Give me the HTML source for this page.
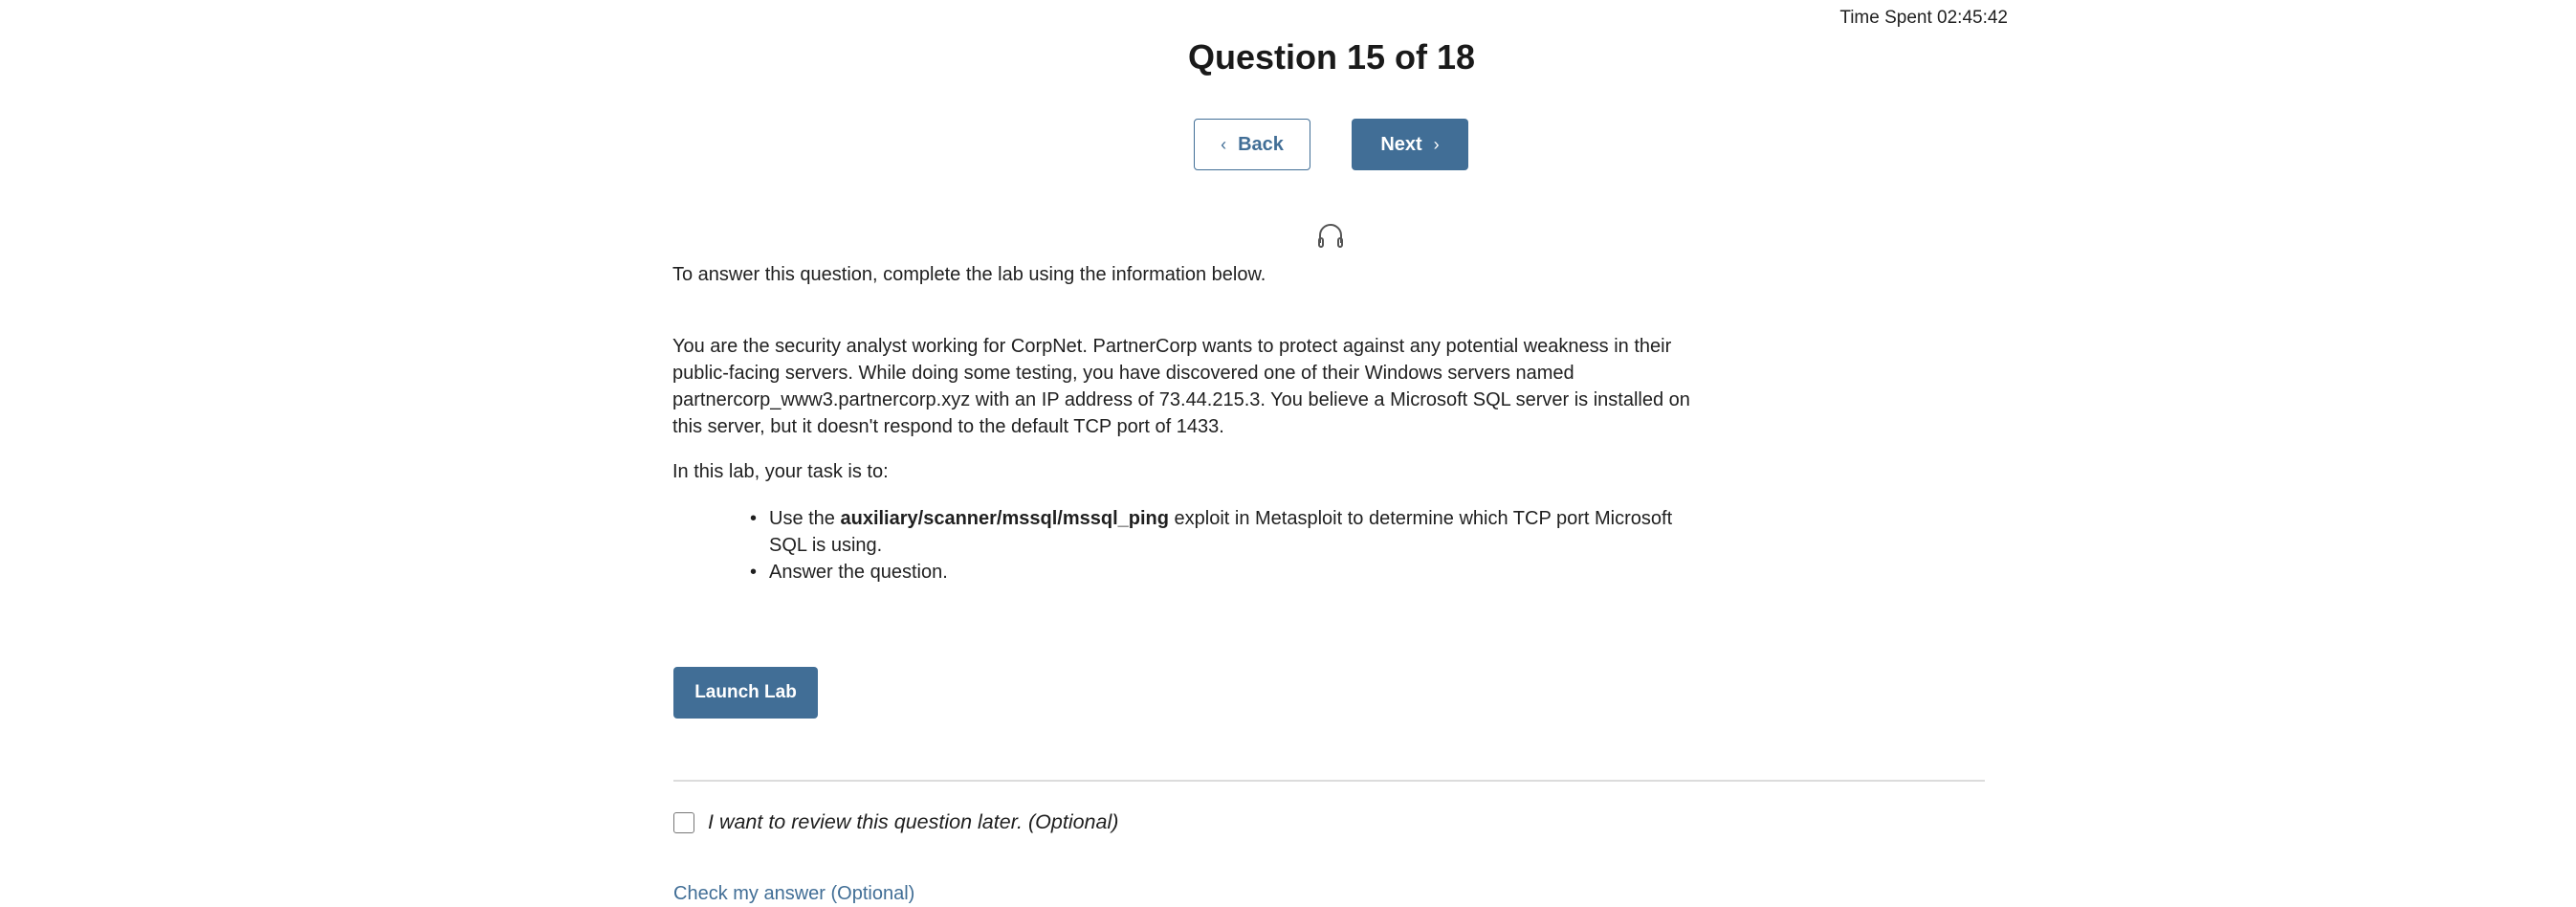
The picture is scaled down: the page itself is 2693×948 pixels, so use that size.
<!DOCTYPE html>
<html><head><meta charset="utf-8"><style>
html,body{margin:0;padding:0;background:#fff;width:2693px;height:940px;overflow:hidden;font-family:"Liberation Sans",sans-serif;color:#1f1f1f}
.a{position:absolute;white-space:nowrap}
.btn{position:absolute;box-sizing:border-box;border-radius:4px;font-weight:bold;font-size:20px;display:flex;align-items:center;justify-content:center}
p{margin:0}
</style></head><body>
<div class="a" style="left:1799px;top:6px;font-size:19px;line-height:26px;width:300px;text-align:right">Time Spent 02:45:42</div>
<div class="a" style="left:1192px;top:38px;width:400px;text-align:center;font-size:36px;font-weight:bold;line-height:44px;color:#1a1a1a">Question 15 of 18</div>
<div class="btn" style="left:1248px;top:124px;width:122px;height:54px;border:1.5px solid #416e96;color:#416e96;background:#fff"><span style="font-weight:normal;margin-right:12px;font-size:18px">&#8249;</span>Back</div>
<div class="btn" style="left:1413px;top:124px;width:122px;height:54px;background:#416e96;color:#fff">Next<span style="font-weight:normal;margin-left:12px;font-size:18px">&#8250;</span></div>
<svg class="a" style="left:1376px;top:232px" width="30" height="28" viewBox="0 0 30 28"><path d="M4 22V14a11 11 0 0 1 22 0v8" fill="none" stroke="#555" stroke-width="2"/><rect x="3" y="17" width="4" height="9" rx="2" fill="none" stroke="#555" stroke-width="2"/><rect x="23" y="17" width="4" height="9" rx="2" fill="none" stroke="#555" stroke-width="2"/></svg>
<div class="a" style="left:703px;top:273px;font-size:20px;line-height:28px">To answer this question, complete the lab using the information below.</div>
<div class="a" style="left:703px;top:348px;font-size:20px;line-height:28px">You are the security analyst working for CorpNet. PartnerCorp wants to protect against any potential weakness in their<br>public-facing servers. While doing some testing, you have discovered one of their Windows servers named<br>partnercorp_www3.partnercorp.xyz with an IP address of 73.44.215.3. You believe a Microsoft SQL server is installed on<br>this server, but it doesn't respond to the default TCP port of 1433.</div>
<div class="a" style="left:703px;top:479px;font-size:20px;line-height:28px">In this lab, your task is to:</div>
<div class="a" style="left:784px;top:528px;font-size:20px;line-height:28px"><span style="position:absolute;left:0">&#8226;</span><div style="margin-left:20px">Use the <b>auxiliary/scanner/mssql/mssql_ping</b> exploit in Metasploit to determine which TCP port Microsoft<br>SQL is using.</div></div>
<div class="a" style="left:784px;top:584px;font-size:20px;line-height:28px"><span style="position:absolute;left:0">&#8226;</span><div style="margin-left:20px">Answer the question.</div></div>
<div class="btn" style="left:704px;top:697px;width:151px;height:54px;background:#416e96;color:#fff;font-size:19px">Launch Lab</div>
<div class="a" style="left:704px;top:815px;width:1371px;height:2px;background:#dcdcdc"></div>
<div class="a" style="left:704px;top:849px;width:20px;height:20px;border:1.5px solid #777;border-radius:3px"></div>
<div class="a" style="left:740px;top:845px;font-size:21.5px;line-height:28px;font-style:italic">I want to review this question later. (Optional)</div>
<div class="a" style="left:704px;top:920px;font-size:20px;line-height:28px;color:#416e96">Check my answer (Optional)</div>
</body></html>
